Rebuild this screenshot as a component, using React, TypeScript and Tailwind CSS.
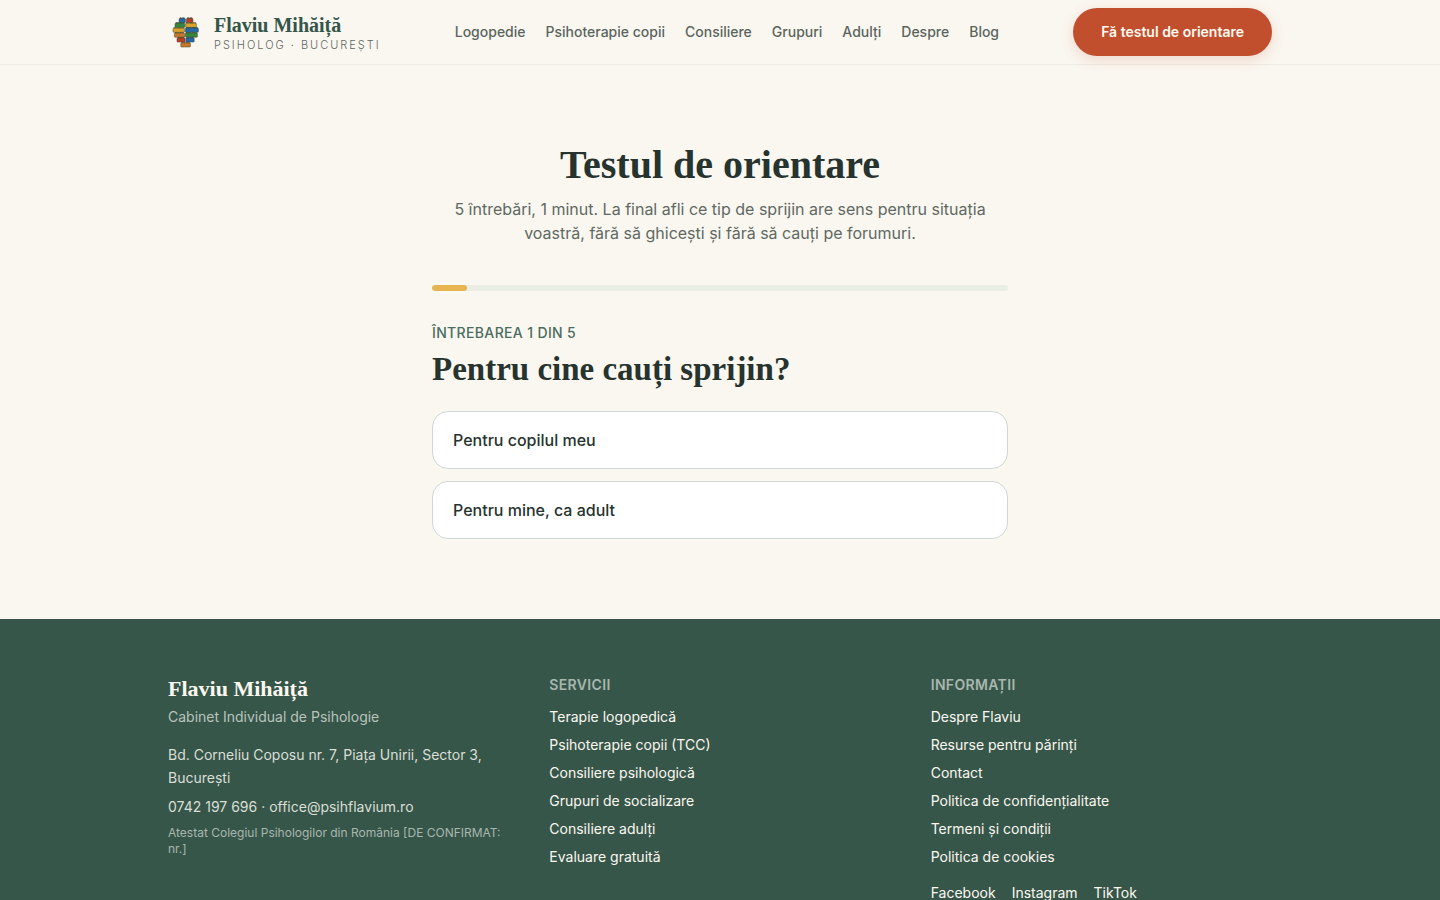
import React from "react";

const sans = "font-['Inter','Liberation_Sans',sans-serif]";
const serif = "font-['Liberation_Serif',serif]";

const nav = ["Logopedie", "Psihoterapie copii", "Consiliere", "Grupuri", "Adulți", "Despre", "Blog"];
const services = [
  "Terapie logopedică",
  "Psihoterapie copii (TCC)",
  "Consiliere psihologică",
  "Grupuri de socializare",
  "Consiliere adulți",
  "Evaluare gratuită",
];
const info = [
  "Despre Flaviu",
  "Resurse pentru părinți",
  "Contact",
  "Politica de confidențialitate",
  "Termeni și condiții",
  "Politica de cookies",
];
const social = ["Facebook", "Instagram", "TikTok"];
const answers = ["Pentru copilul meu", "Pentru mine, ca adult"];

type Brick = { x: number; y: number; w: number; fill: string };
const RED = "#c03a28";
const BLUE = "#2468a8";
const GREEN = "#35863c";
const YELLOW = "#dca32a";
const ORANGE = "#c9772a";

const bricks: Brick[] = [
  { x: 7, y: 2.6, w: 6.4, fill: BLUE },
  { x: 14.4, y: 2.6, w: 6.6, fill: RED },
  { x: 3, y: 7.3, w: 9.8, fill: GREEN },
  { x: 13.6, y: 7.3, w: 10.8, fill: YELLOW },
  { x: 1, y: 12.2, w: 11.4, fill: YELLOW },
  { x: 13.2, y: 12.2, w: 13.2, fill: BLUE },
  { x: 2.4, y: 17.1, w: 10.2, fill: ORANGE },
  { x: 13.4, y: 17.1, w: 12, fill: GREEN },
  { x: 5, y: 22, w: 8, fill: RED },
  { x: 13.8, y: 22, w: 8.4, fill: BLUE },
  { x: 8.8, y: 26.9, w: 9.6, fill: ORANGE },
];

function Logo() {
  return (
    <svg viewBox="0 0 28 32" className="h-8 w-7 shrink-0" aria-hidden="true">
      {bricks.map((b) => (
        <g key={`${b.x}-${b.y}`} fill={b.fill} stroke="#3c4a35" strokeWidth="0.5">
          <rect x={b.x + 1} y={b.y - 0.8} width={b.w / 2 - 1.5} height="2" />
          <rect x={b.x + b.w / 2 + 0.5} y={b.y - 0.8} width={b.w / 2 - 1.5} height="2" />
          <rect x={b.x} y={b.y} width={b.w} height="4.1" rx="0.6" />
        </g>
      ))}
    </svg>
  );
}

function LinkColumn({ title, links, children }: { title: string; links: string[]; children?: React.ReactNode }) {
  return (
    <div>
      <h2 className="text-sm leading-5 font-semibold tracking-wide text-[#a8b7ae] uppercase">{title}</h2>
      <ul className="mt-3 flex flex-col gap-2">
        {links.map((l) => (
          <li key={l} className="flex">
            <a href="#" className="text-sm leading-5 text-[#fbf8f0]">{l}</a>
          </li>
        ))}
      </ul>
      {children}
    </div>
  );
}

export default function App() {
  return (
    <div className={`min-h-screen bg-[#faf7f0] text-[#26332e] ${sans}`}>
      <header className="border-b border-[#eeece4]">
        <div className="mx-auto flex h-16 max-w-6xl items-center justify-between px-6">
          <a href="#" className="flex items-center gap-3 pl-1">
            <Logo />
            <span className="flex flex-col pt-0.5 pl-0.5">
              <span className={`text-xl leading-6 font-bold text-[#34554a] ${serif}`}>Flaviu Mihăiță</span>
              <span className="text-[11px] leading-4 font-light tracking-[2px] text-[#5f6963] uppercase">Psiholog · București</span>
            </span>
          </a>
          <nav className="flex gap-5">
            {nav.map((n) => (
              <a key={n} href="#" className="text-sm font-medium text-[#5a655f]">{n}</a>
            ))}
          </nav>
          <a
            href="#"
            className="flex h-12 items-center rounded-full bg-[#c14f2e] px-7 text-sm font-semibold text-[#fffaf0] shadow-[0_4px_14px_rgba(193,79,46,0.18)]"
          >
            Fă testul de orientare
          </a>
        </div>
      </header>

      <main className="mx-auto max-w-xl py-20">
        <h1 className={`text-center text-[40px] leading-10 font-bold ${serif}`}>Testul de orientare</h1>
        <p className="mt-3 text-center text-base leading-6 text-[#5f6963]">
          5 întrebări, 1 minut. La final afli ce tip de sprijin are sens pentru situația voastră, fără să ghicești și fără să cauți pe forumuri.
        </p>
        <div
          role="progressbar"
          aria-label="Progres"
          aria-valuenow={6}
          aria-valuemin={0}
          aria-valuemax={100}
          className="mt-10 h-1.5 overflow-hidden rounded-full bg-[#ebeee4]"
        >
          <div className="h-full w-[6%] rounded-full bg-[#e6b450]" />
        </div>
        <p className="mt-8 text-sm leading-5 font-medium tracking-wide text-[#4a6d5f] uppercase">Întrebarea 1 din 5</p>
        <h2 className={`mt-2 text-[33px] leading-9 font-bold ${serif}`}>Pentru cine cauți sprijin?</h2>
        <div className="mt-6 flex flex-col gap-3">
          {answers.map((a) => (
            <button
              key={a}
              type="button"
              className="h-[58px] rounded-2xl border border-[#cfd8d4] bg-white px-5 text-left text-base font-medium"
            >
              {a}
            </button>
          ))}
        </div>
      </main>

      <footer className="bg-[#37564a]">
        <div className="mx-auto grid max-w-6xl grid-cols-3 gap-10 px-6 py-14">
          <div>
            <p className={`text-[22px] leading-7 font-bold text-[#fbf8f0] ${serif}`}>Flaviu Mihăiță</p>
            <p className="mt-1 text-sm leading-5 text-[#b8c4bb]">Cabinet Individual de Psihologie</p>
            <p className="mt-4 text-sm leading-[23px] text-[#d9dfd5]">
              Bd. Corneliu Coposu nr. 7, Piața Unirii, Sector 3, București
            </p>
            <p className="mt-2 text-sm leading-5 text-[#d9dfd5]">
              <a href="#">0742 197 696</a> · <a href="#">office@psihflavium.ro</a>
            </p>
            <p className="mt-2 text-xs leading-4 text-[#a8b7ae]">
              Atestat Colegiul Psihologilor din România [DE CONFIRMAT: nr.]
            </p>
          </div>
          <LinkColumn title="Servicii" links={services} />
          <LinkColumn title="Informații" links={info}>
            <div className="mt-4 flex gap-4">
              {social.map((s) => (
                <a key={s} href="#" className="text-sm leading-5 text-[#fbf8f0]">{s}</a>
              ))}
            </div>
          </LinkColumn>
        </div>
      </footer>
    </div>
  );
}
